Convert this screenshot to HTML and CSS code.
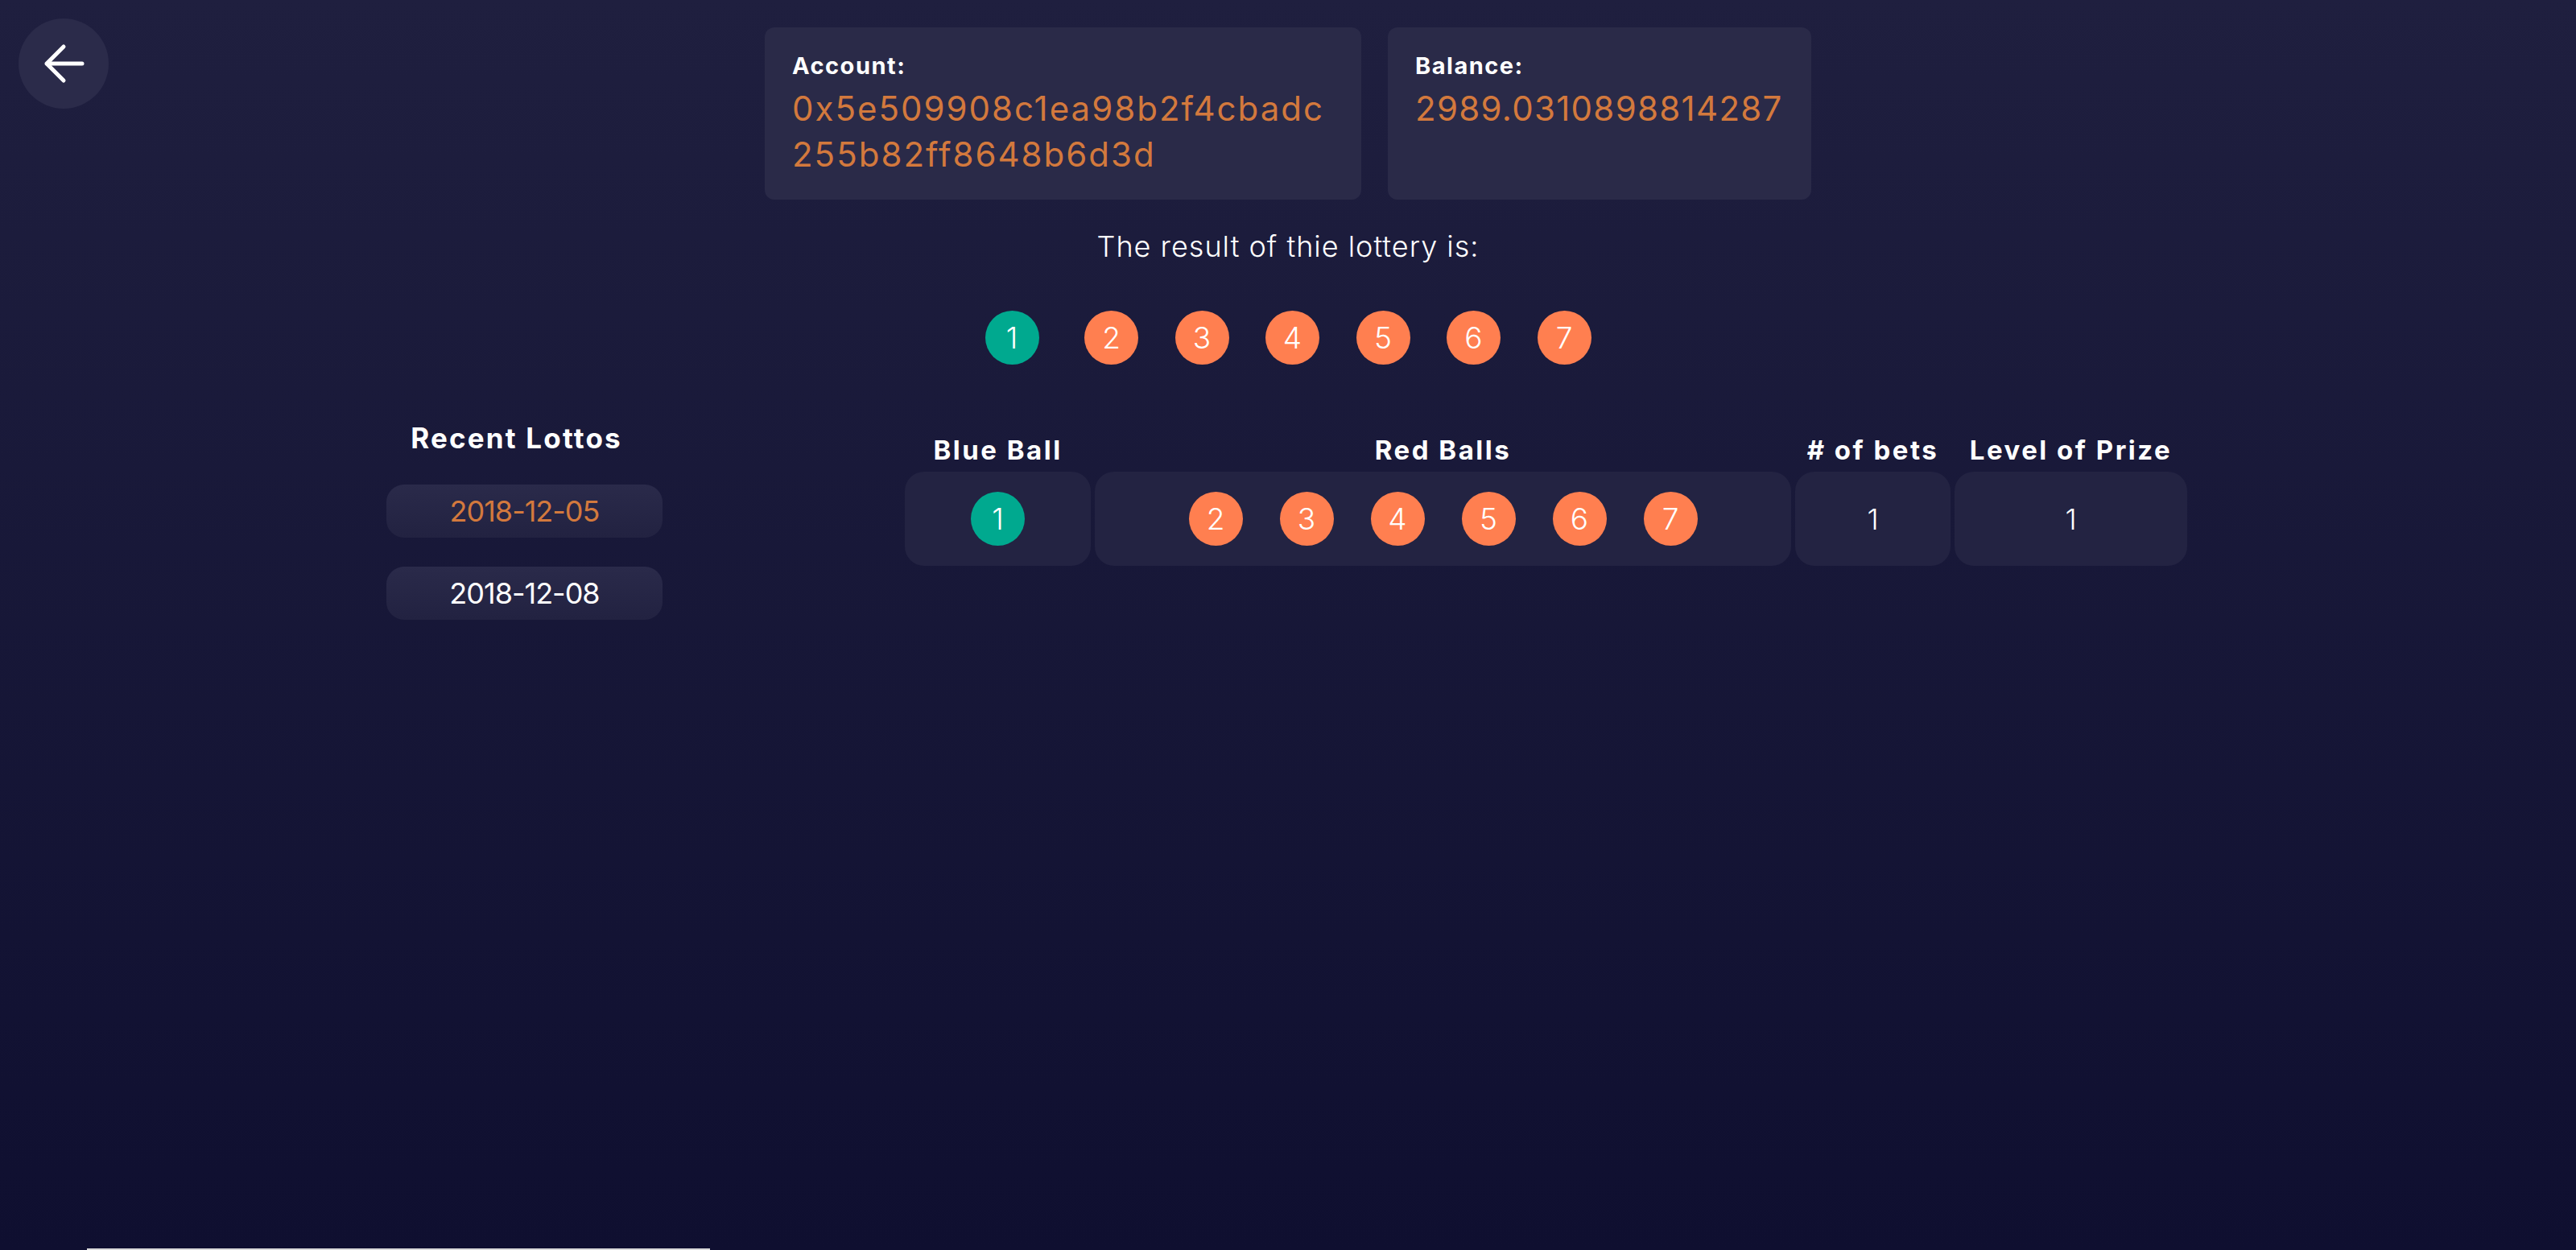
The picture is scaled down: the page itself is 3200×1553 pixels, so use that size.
FILE: index.html
```html
<!DOCTYPE html>
<html lang="en">
<head>
<meta charset="utf-8">
<title>Lottery</title>
<link rel="stylesheet" href="styles.css">
</head>
<body>
<a class="back-btn" href="#" aria-label="Back">
  <svg viewBox="0 0 112 112" width="112" height="112"><path d="M79 56H35M56 35L35 56L56 77" stroke="#fff" stroke-width="5" fill="none" stroke-linecap="round" stroke-linejoin="round"/></svg>
</a>
<div class="page">
  <div class="accounts">
    <div class="card card-account">
      <div class="label">Account:</div>
      <div class="value">0x5e509908c1ea98b2f4cbadc255b82ff8648b6d3d</div>
    </div>
    <div class="card card-balance">
      <div class="label">Balance:</div>
      <div class="value">2989.0310898814287</div>
    </div>
  </div>
  <p class="result-title">The result of thie lottery is:</p>
  <div class="result-balls">
    <span class="ball blue">1</span>
    <span class="ball">2</span>
    <span class="ball">3</span>
    <span class="ball">4</span>
    <span class="ball">5</span>
    <span class="ball">6</span>
    <span class="ball">7</span>
  </div>
  <div class="content">
    <aside class="recent">
      <h3>Recent Lottos</h3>
      <button class="date active">2018-12-05</button>
      <button class="date second">2018-12-08</button>
    </aside>
    <div class="bets">
      <div class="th">Blue Ball</div>
      <div class="th">Red Balls</div>
      <div class="th"># of bets</div>
      <div class="th">Level of Prize</div>
      <div class="td"><span class="ball blue">1</span></div>
      <div class="td">
        <span class="ball">2</span>
        <span class="ball">3</span>
        <span class="ball">4</span>
        <span class="ball">5</span>
        <span class="ball">6</span>
        <span class="ball">7</span>
      </div>
      <div class="td">1</div>
      <div class="td">1</div>
    </div>
  </div>
</div>
<div class="hscroll"></div>
</body>
</html>
```
FILE: styles.css
```css
html {
  height: 100%;
  background: #0f0f30;
}
body {
  margin: 0;
  min-height: 100vh;
  background: linear-gradient(180deg, #1f1f3f 0%, #0f0f30 100%);
  font-family: Inter, "Open Sans", "DejaVu Sans", sans-serif;
  color: #ffffff;
}
.back-btn {
  position: absolute;
  top: 23px;
  left: 23px;
  width: 112px;
  height: 112px;
  border-radius: 50%;
  background: #2b2b4a;
  display: block;
}
.back-btn svg {
  display: block;
}
.page {
  padding-top: 34px;
}
.accounts {
  display: flex;
  justify-content: center;
  gap: 33px;
}
.card {
  background: #2a2a48;
  border-radius: 12px;
  padding: 30px 34px 28px;
  box-sizing: border-box;
}
.card-account {
  width: 741px;
}
.card-balance {
  width: 526px;
}
.label {
  font-weight: 700;
  font-size: 29px;
  line-height: 36px;
  letter-spacing: 1.5px;
}
.value {
  margin-top: 6px;
  font-size: 42px;
  line-height: 57px;
  color: #d3793d;
  word-break: break-all;
  letter-spacing: 2px;
}
.card-balance .value {
  word-break: normal;
  white-space: nowrap;
  letter-spacing: 1.3px;
}
.result-title {
  margin: 36px 0 0;
  text-align: center;
  font-size: 36px;
  line-height: 44px;
  font-weight: 300;
  letter-spacing: 1px;
}
.result-balls {
  display: flex;
  justify-content: center;
  gap: 45.5px;
  margin-top: 58px;
}
.ball {
  width: 67px;
  height: 67px;
  border-radius: 50%;
  display: flex;
  align-items: center;
  justify-content: center;
  font-size: 37px;
  font-weight: 300;
  color: #ffffff;
  background: #ff7f50;
}
.ball.blue {
  background: #00a98f;
}
.result-balls .ball.blue {
  margin-right: 11px;
}
.content {
  display: flex;
  align-items: flex-start;
  margin-top: 70px;
  padding-left: 480px;
}
.recent {
  width: 343px;
  display: flex;
  flex-direction: column;
}
.recent h3 {
  margin: 0;
  font-size: 35px;
  line-height: 42px;
  font-weight: 700;
  text-align: center;
  padding-right: 20px;
  letter-spacing: 2.2px;
}
.date {
  height: 66px;
  margin-top: 37px;
  border: 0;
  border-radius: 22px;
  background: linear-gradient(180deg, #2a2a4a 0%, #222241 100%);
  color: #ffffff;
  font-family: Inter, "Open Sans", sans-serif;
  font-size: 36px;
  line-height: 66px;
  font-weight: 400;
  letter-spacing: -1px;
  padding: 0;
  text-align: center;
}
.date.active {
  color: #d3793d;
}
.date.second {
  margin-top: 36px;
}
.bets {
  margin-left: 301px;
  margin-top: 16px;
  display: grid;
  grid-template-columns: 231px 865px 193px 289px;
  column-gap: 5px;
  row-gap: 7px;
}
.th {
  text-align: center;
  font-size: 33px;
  line-height: 40px;
  font-weight: 700;
  letter-spacing: 2.5px;
}
.td {
  height: 117px;
  background: #232342;
  border-radius: 24px;
  display: flex;
  align-items: center;
  justify-content: center;
  gap: 46px;
  font-size: 36px;
  font-weight: 300;
}
.hscroll {
  position: fixed;
  left: 108px;
  bottom: 0;
  width: 774px;
  height: 2px;
  background: #d9d9d9;
}
```
